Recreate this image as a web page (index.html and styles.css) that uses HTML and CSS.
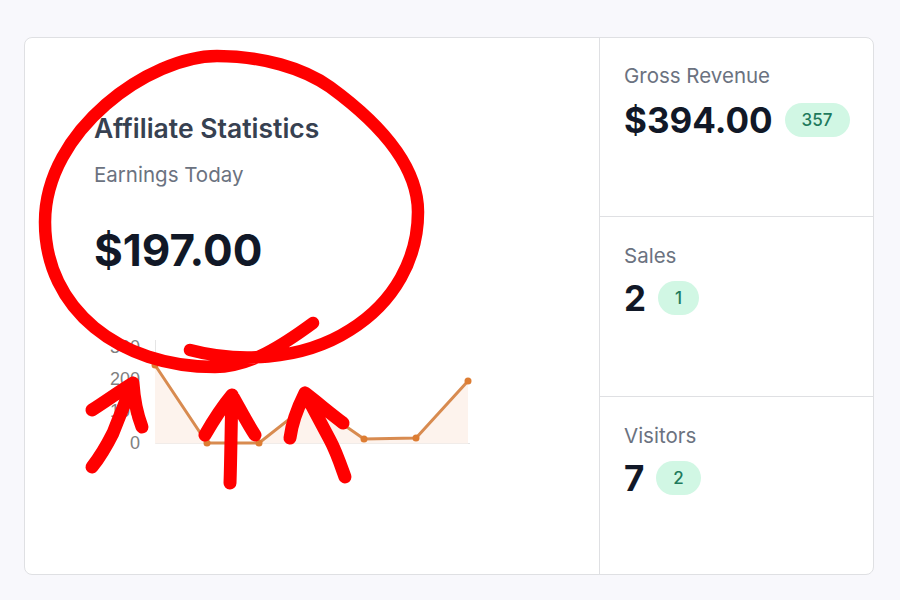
FILE: index.html
```html
<!DOCTYPE html>
<html lang="en">
<head>
<meta charset="utf-8">
<title>Affiliate Statistics</title>
<link rel="stylesheet" href="styles.css">
</head>
<body>
<main class="card">
  <section class="main">
    <h1 class="title">Affiliate Statistics</h1>
    <p class="subtitle">Earnings Today</p>
    <p class="amount">$197.00</p>
    <svg class="chart" width="420" height="130" viewBox="0 0 420 130">
      <g class="ticks">
        <text x="70" y="33" text-anchor="end">300</text>
        <text x="70" y="65" text-anchor="end">200</text>
        <text x="70" y="97" text-anchor="end">100</text>
        <text x="70" y="129" text-anchor="end">0</text>
      </g>
      <path class="axis" d="M85.5 20V123.5H400"/>
      <path class="area" d="M85 45L137 123L189 123L241 82L294 119L346 118L398 61V123.5H85Z"/>
      <path class="line" d="M85 45L137 123L189 123L241 82L294 119L346 118L398 61"/>
      <g class="dots">
        <circle cx="85" cy="45" r="3.5"/><circle cx="137" cy="123" r="3.5"/><circle cx="189" cy="123" r="3.5"/><circle cx="241" cy="82" r="3.5"/><circle cx="294" cy="119" r="3.5"/><circle cx="346" cy="118" r="3.5"/><circle cx="398" cy="61" r="3.5"/>
      </g>
    </svg>
  </section>
  <aside class="side">
    <div class="stat">
      <div class="label">Gross Revenue</div>
      <div class="row"><span class="value">$394.00</span><span class="badge">357</span></div>
    </div>
    <div class="stat">
      <div class="label">Sales</div>
      <div class="row"><span class="value">2</span><span class="badge">1</span></div>
    </div>
    <div class="stat">
      <div class="label">Visitors</div>
      <div class="row"><span class="value">7</span><span class="badge">2</span></div>
    </div>
  </aside>
</main>
<svg class="scribble" width="900" height="600" viewBox="0 0 900 600">
  <path class="ink-loop" d="M190 350C235 362 300 362 350 330C395 302 418 258 418 212C418 165 378 122 330 87C303 68 262 56 217 56C150 56 45 130 45 222C45 310 120 367 215 367C250 367 283 345 313 323"/>
  <path class="ink" d="M92 467C100 457 107 445 113 433C120 415 127 398 133 383M92 410C106 401 120 391 133 383C134 398 137 414 142 427"/>
  <path class="ink" d="M230 483C231 455 231 425 232 395M205 435C213 421 222 407 232 395C240 409 247 423 255 435"/>
  <path class="ink" d="M345 477C340 463 336 451 330 440C322 425 313 408 305 393M290 438C292 422 298 407 305 393C318 403 331 414 343 423"/>
</svg>
</body>
</html>
```
FILE: styles.css
```css
* { box-sizing: border-box; }
html, body { margin: 0; height: 100%; }
body {
  background: #f8f8fc;
  padding: 37px 26px 25px 24px;
  font-family: Inter, "Noto Sans", sans-serif;
  overflow: hidden;
}
.card {
  display: flex;
  height: 538px;
  background: #fff;
  border: 1px solid #dfe0e3;
  border-radius: 8px;
  overflow: hidden;
}
.main {
  flex: 0 0 575px;
  padding: 74px 0 0 69px;
  border-right: 1px solid #dfe0e3;
}
.title {
  margin: 0;
  font-size: 26.5px;
  line-height: 32px;
  font-weight: 600;
  color: #374151;
}
.subtitle {
  margin: 17px 0 0;
  font-size: 20.5px;
  line-height: 28px;
  color: #6b7280;
}
.amount {
  margin: 33px 0 0;
  font-size: 44px;
  line-height: 56px;
  font-weight: 700;
  color: #111827;
}
.chart { display: block; margin: 42px 0 0 -24px; overflow: visible; }
.ticks text { font: 18px "Liberation Sans", Arial, sans-serif; fill: #808080; }
.axis { fill: none; stroke: #e5e5e5; stroke-width: 1; }
.area { fill: #fdf3ed; }
.line { fill: none; stroke: #d88b50; stroke-width: 3; }
.dots circle { fill: #dd7d33; }
.side { flex: 1; display: flex; flex-direction: column; }
.stat {
  height: 180px;
  padding: 25px 24px 0 24px;
  border-bottom: 1px solid #dfe0e3;
}
.stat:first-child { height: 179px; padding-top: 24px; }
.stat:first-child .row { margin-top: 8px; }
.stat:last-child { border-bottom: 0; flex: 1; }
.label {
  font-size: 20.5px;
  line-height: 28px;
  color: #6b7280;
}
.row { display: flex; align-items: center; gap: 12px; margin-top: 6px; }
.value {
  font-size: 35px;
  line-height: 44px;
  font-weight: 700;
  color: #111827;
}
.badge {
  padding: 6px 17px;
  border-radius: 999px;
  background: #d1f7e4;
  color: #1f7a5c;
  font-size: 17px;
  line-height: 22px;
  font-weight: 500;
  text-align: center;
}
.scribble { position: absolute; left: 0; top: 0; pointer-events: none; }
.ink, .ink-loop {
  fill: none;
  stroke: #ff0000;
  stroke-linecap: round;
  stroke-linejoin: round;
}
.ink { stroke-width: 13; }
.ink-loop { stroke-width: 12.5; }
```
